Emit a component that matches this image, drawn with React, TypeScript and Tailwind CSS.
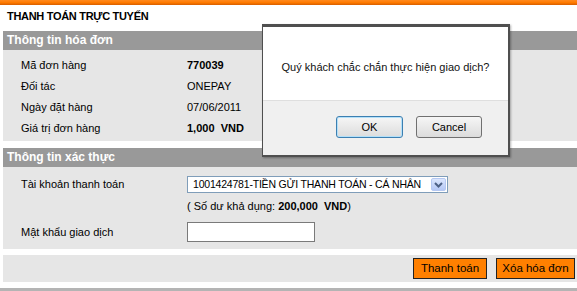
import React from "react";

function Row({ label, value, bold }: { label: string; value: string; bold?: boolean }) {
  return (
    <div className="flex h-[21px] items-center">
      <div className="w-[184px] pl-[18px]">{label}</div>
      <div className={bold ? "font-bold" : ""}>{value}</div>
    </div>
  );
}

export default function App() {
  return (
    <div className="relative h-[291px] w-[577px] overflow-hidden bg-white font-['Liberation_Sans',Arial,sans-serif] text-[11px] leading-[13px] text-black">
      <div className="h-[5px] bg-gradient-to-b from-[#ff8a1c] via-[#ff7a00] to-[#d85e00]" />
      <div className="h-[26px] pl-[7px] pt-[5px] text-[11px] font-bold tracking-[-0.3px]">THANH TOÁN TRỰC TUYẾN</div>

      <div className="flex flex-col pl-[3px]">
        <div className="flex h-[19px] items-center bg-[#999999] pl-[4px] text-[12px] font-bold text-white">
          Thông tin hóa đơn
        </div>
        <div className="h-[91px] bg-[#e6e6e6] pt-[5px]">
          <Row label="Mã đơn hàng" value="770039" bold />
          <Row label="Đối tác" value="ONEPAY" />
          <Row label="Ngày đặt hàng" value="07/06/2011" />
          <Row label="Giá trị đơn hàng" value={"1,000\u00a0\u00a0VND"} bold />
        </div>
        <div className="h-[7px]" />
        <div className="flex h-[19px] items-center bg-[#999999] pl-[4px] text-[12px] font-bold text-white">
          Thông tin xác thực
        </div>
        <div className="h-[82px] bg-[#e6e6e6] pt-[9px]">
          <div className="flex h-[17px] items-center">
            <div className="w-[184px] pl-[18px]">Tài khoản thanh toán</div>
            <div className="flex h-[17px] w-[261px] items-center border border-[#7f9db9] bg-white pl-[5px] pr-[1px]">
              <span className="flex-1 whitespace-nowrap text-[10.5px] tracking-[-0.2px]">1001424781-TIỀN GỬI THANH TOÁN - CÁ NHÂN</span>
              <span className="flex h-[13px] w-[15px] items-center justify-center rounded-[2px] border border-[#b5c8f2] bg-gradient-to-b from-[#dbe6fd] to-[#b4c7f5]">
                <svg width="9" height="6" viewBox="0 0 9 6">
                  <path d="M1 1 L4.5 4.5 L8 1" stroke="#4d6185" strokeWidth="2" fill="none" />
                </svg>
              </span>
            </div>
          </div>
          <div className="flex h-[26px] items-center">
            <div className="w-[184px]" />
            <div>
              ( Số dư khả dụng: <span className="font-bold">{"200,000\u00a0\u00a0VND"}</span>)
            </div>
          </div>
          <div className="flex h-[26px] items-center">
            <div className="w-[184px] pl-[18px]">Mật khẩu giao dịch</div>
            <div className="h-[20px] w-[128px] border border-[#7a7a7a] bg-white" />
          </div>
        </div>
        <div className="h-[6px]" />
        <div className="flex h-[27px] items-center justify-end gap-[9px] bg-[#e6e6e6] pr-[2px]">
          <button className="flex h-[21px] w-[74px] items-center justify-center border border-[#222] bg-[#ff8000] text-[11.5px] text-black">
            Thanh toán
          </button>
          <button className="flex h-[21px] w-[79px] items-center justify-center border border-[#222] bg-[#ff8000] text-[11.5px] text-black">
            Xóa hóa đơn
          </button>
        </div>
        <div className="h-[6px]" />
      </div>
      <div className="h-[3px] bg-[#b4b4b4]" />

      {/* artifact text behind dialog */}
      <div className="absolute left-[283px] top-[151px] h-[6px] w-[227px] overflow-hidden">
        <div className="-mt-[5px] whitespace-nowrap text-[11px] leading-[11px] text-[#222]">
          THANH TOÁN TRỰC TUYẾN - NGÂN HÀNG TMCP - PHÍ GIAO DỊCH
        </div>
      </div>

      {/* Confirm dialog */}
      <div className="absolute left-[262px] top-[24px] flex h-[133px] w-[248px] flex-col border-b-2 border-l border-r-2 border-t-[3px] border-[#4f4f4f] bg-white shadow-[1px_1px_2px_rgba(0,0,0,0.3)]">
        <div className="flex h-[73px] items-start justify-center pt-[34px] text-[11px] text-[#111]">
          Quý khách chắc chắn thực hiện giao dịch?
        </div>
        <div className="flex flex-1 items-start justify-end gap-[13px] border-t border-[#dfdfdf] bg-[#f0f0f0] pr-[26px] pt-[15px]">
          <button className="flex h-[22px] w-[67px] items-center justify-center rounded-[3px] border border-[#3c7fb1] bg-gradient-to-b from-[#f6f6f6] to-[#dcdcdc] text-[11px] text-black shadow-[inset_0_0_0_1px_#b3e0f9]">
            OK
          </button>
          <button className="flex h-[22px] w-[66px] items-center justify-center rounded-[3px] border border-[#707070] bg-gradient-to-b from-[#f6f6f6] to-[#dcdcdc] text-[11px] text-black">
            Cancel
          </button>
        </div>
      </div>
    </div>
  );
}
